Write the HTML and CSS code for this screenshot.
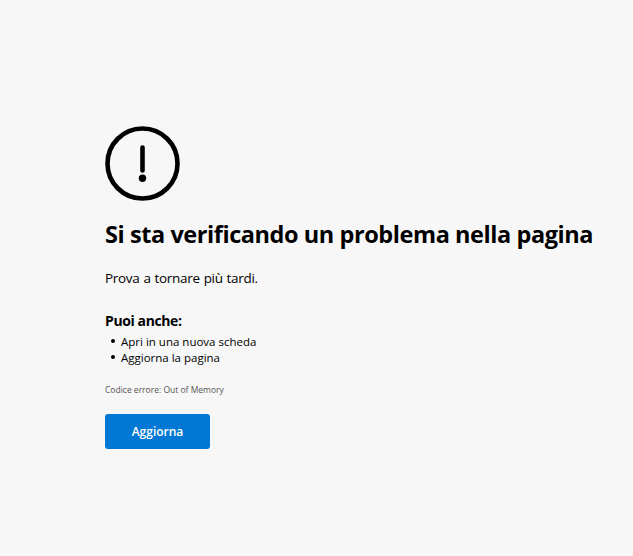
FILE: index.html
```html
<!DOCTYPE html>
<html lang="it">
<head>
  <meta charset="UTF-8">
  <title>Errore</title>
  <link rel="stylesheet" href="styles.css">
</head>
<body>
  <main class="errore">
    <svg class="icona" width="75" height="75" viewBox="0 0 75 75" aria-hidden="true">
      <circle cx="37.5" cy="37.5" r="35" fill="none" stroke="#000" stroke-width="4.6"></circle>
      <path d="M37.5 21.5v23" fill="none" stroke="#000" stroke-width="4.6" stroke-linecap="round"></path>
      <circle cx="37.5" cy="52.3" r="3.7" fill="#000"></circle>
    </svg>
    <h1>Si sta verificando un problema nella pagina</h1>
    <p class="testo">Prova a tornare più tardi.</p>
    <h2>Puoi anche:</h2>
    <ul>
      <li>Apri in una nuova scheda</li>
      <li>Aggiorna la pagina</li>
    </ul>
    <p class="codice">Codice errore: Out of Memory</p>
    <button>Aggiorna</button>
  </main>
</body>
</html>
```

FILE: styles.css
```css
html, body {
  height: 100%;
}

body {
  margin: 0;
  background-color: #f7f7f7;
  color: #000;
  font-family: "Open Sans", "Noto Sans", sans-serif;
  overflow: hidden;
}

.errore {
  padding: 126px 0 0 105px;
}

.icona {
  display: block;
}

h1 {
  margin: 17px 0 0;
  font-size: 23.5px;
  line-height: 32px;
  font-weight: 700;
  letter-spacing: -0.43px;
  white-space: nowrap;
}

.testo {
  margin: 18px 0 0;
  font-size: 13.5px;
  line-height: 20px;
  letter-spacing: -0.3px;
  word-spacing: 0.7px;
}

h2 {
  margin: 23px 0 0;
  font-size: 14px;
  line-height: 20px;
  font-weight: 700;
  letter-spacing: -0.4px;
}

ul {
  margin: 3px 0 0;
  padding: 0 0 0 16px;
  list-style: none;
  font-size: 11.5px;
  line-height: 16px;
}

li {
  position: relative;
}

/* il pallino sta piu in alto e piu vicino al testo del marker normale */
li::before {
  content: "";
  position: absolute;
  left: -10px;
  top: 5px;
  width: 4px;
  height: 4px;
  border-radius: 50%;
  background-color: #000;
}

.codice {
  margin: 18px 0 0;
  font-size: 8.5px;
  line-height: 12px;
  color: #555;
}

button {
  display: block;
  width: 105px;
  height: 35px;
  margin-top: 18px;
  background-color: #0078d4;
  color: #fff;
  border: none;
  border-radius: 3px;
  font: 600 12px "Open Sans", sans-serif;
}
```
